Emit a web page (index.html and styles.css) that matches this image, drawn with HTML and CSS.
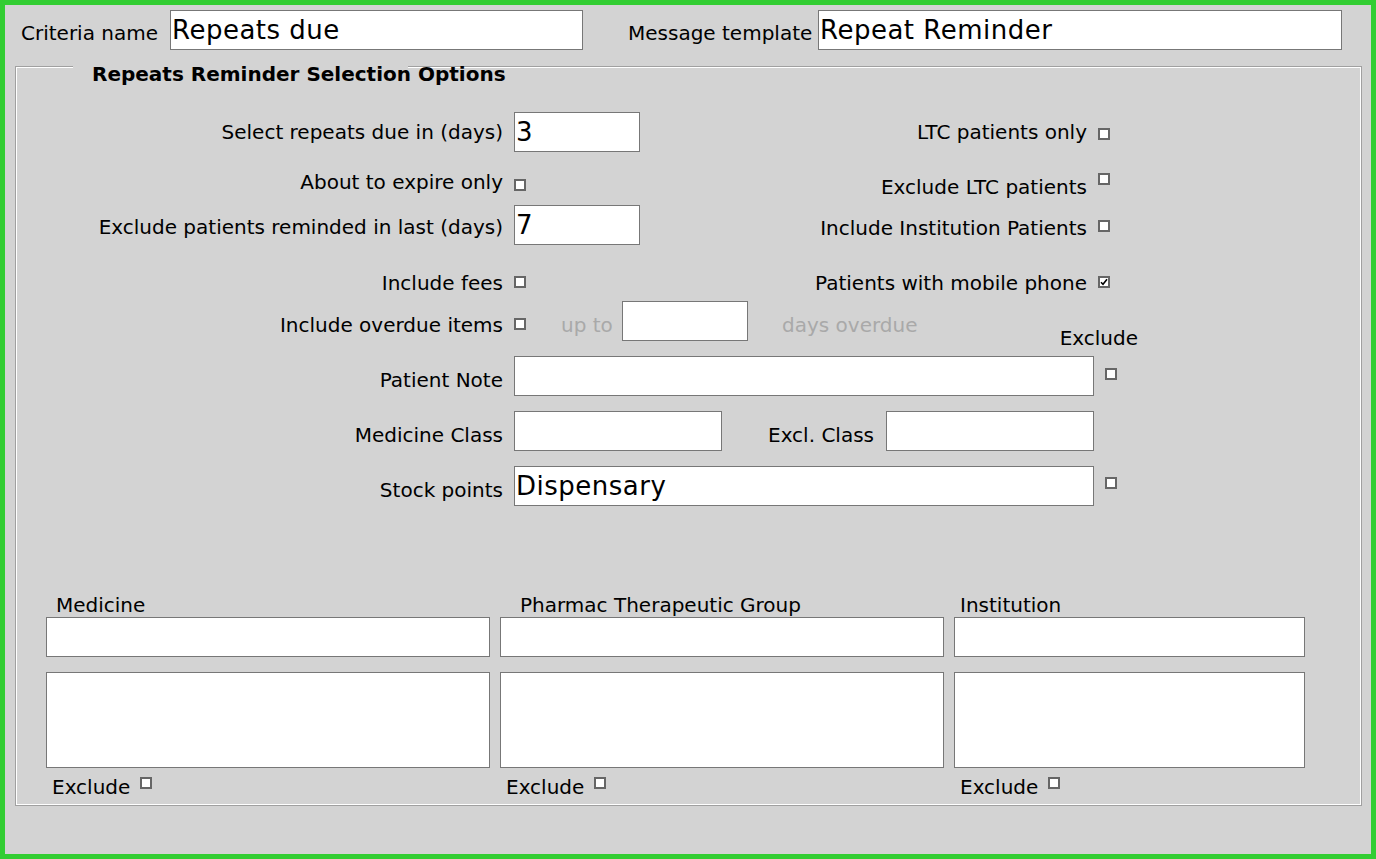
FILE: index.html
```html
<!DOCTYPE html>
<html lang="en">
<head>
  <meta charset="UTF-8" />
  <title>Repeats Reminder Criteria</title>
  <link rel="stylesheet" href="styles.css">
</head>
<body>
  <div class="frame">
    <div class="head">
      <label class="hl crit-l">Criteria name</label>
      <input class="tx crit" value="Repeats due">
      <label class="hl msg">Message template</label>
      <input class="tx tmpl" value="Repeat Reminder">
    </div>

    <fieldset class="opts">
      <legend>Repeats Reminder Selection Options</legend>

      <div class="opt r1">
        <label class="lbl">Select repeats due in (days)</label>
        <input class="tx num" value="3">
        <div class="side"><label>LTC patients only</label><input type="checkbox" class="cb"></div>
      </div>

      <div class="opt r2">
        <label class="lbl">About to expire only</label>
        <input type="checkbox" class="cb">
        <div class="side"><label>Exclude LTC patients</label><input type="checkbox" class="cb"></div>
      </div>

      <div class="opt r3">
        <label class="lbl">Exclude patients reminded in last (days)</label>
        <input class="tx num" value="7">
        <div class="side"><label>Include Institution Patients</label><input type="checkbox" class="cb"></div>
      </div>

      <div class="opt r4">
        <label class="lbl">Include fees</label>
        <input type="checkbox" class="cb">
        <div class="side"><label>Patients with mobile phone</label><input type="checkbox" class="cb" checked></div>
      </div>

      <div class="opt r5">
        <label class="lbl">Include overdue items</label>
        <input type="checkbox" class="cb">
        <span class="dim upto">up to</span>
        <input class="tx num">
        <span class="dim days">days overdue</span>
        <span class="exhead">Exclude</span>
      </div>

      <div class="opt r6">
        <label class="lbl">Patient Note</label>
        <input class="tx wide">
        <input type="checkbox" class="cb">
      </div>

      <div class="opt r7">
        <label class="lbl">Medicine Class</label>
        <input class="tx cls">
        <label class="excl">Excl. Class</label>
        <input class="tx cls">
      </div>

      <div class="opt r8">
        <label class="lbl">Stock points</label>
        <input class="tx wide" value="Dispensary">
        <input type="checkbox" class="cb">
      </div>

      <div class="lists">
        <div class="col med">
          <label class="cap">Medicine</label>
          <input class="tx pick">
          <textarea class="box"></textarea>
          <div class="ex"><span>Exclude</span><input type="checkbox" class="cb"></div>
        </div>
        <div class="col grp">
          <label class="cap">Pharmac Therapeutic Group</label>
          <input class="tx pick">
          <textarea class="box"></textarea>
          <div class="ex"><span>Exclude</span><input type="checkbox" class="cb"></div>
        </div>
        <div class="col inst">
          <label class="cap">Institution</label>
          <input class="tx pick">
          <textarea class="box"></textarea>
          <div class="ex"><span>Exclude</span><input type="checkbox" class="cb"></div>
        </div>
      </div>
    </fieldset>
  </div>
</body>
</html>
```

FILE: styles.css
```css
html, body {
  margin: 0; padding: 0;
  background: #d3d3d3;
  color: #000;
  font-family: "DejaVu Sans", Verdana, sans-serif;
  font-size: 20px;
  line-height: 24px;
}
* { box-sizing: border-box; }

.frame {
  width: 1376px;
  height: 859px;
  border: 5px solid #32cd32;
  background: #d3d3d3;
  padding: 5px 10px 0;
}

/* text boxes */
.tx {
  height: 40px;
  border: 1px solid #777;
  background: #fff;
  font-family: "DejaVu Sans", Tahoma, sans-serif;
  font-size: 26px;
  letter-spacing: 0.5px;
  padding: 0 1px;
  margin: 0;
  color: #000;
  flex-shrink: 0;
}
.num { width: 126px; }
.wide { width: 580px; }
.cls { width: 208px; }

.cb {
  appearance: none;
  -webkit-appearance: none;
  width: 12px; height: 12px;
  margin: 0;
  border: 2px solid #666;
  background: #fff;
  flex-shrink: 0;
}
.cb:checked {
  background: #fff url("data:image/svg+xml,%3Csvg xmlns='http://www.w3.org/2000/svg' viewBox='0 0 8 8'%3E%3Cpath d='M1 4.2l2 2 4-5' fill='none' stroke='%23000' stroke-width='1.6'/%3E%3C/svg%3E") center/8px 8px no-repeat;
}

/* header row */
.head {
  display: flex;
  align-items: flex-start;
  padding-left: 6px;
  height: 40px;
}
.hl { margin-top: 11px; white-space: nowrap; }
.crit-l { width: 149px; }
.crit { width: 413px; }
.msg { width: 190px; margin-left: 45px; }
.tmpl { width: 524px; }

/* options group */
.opts {
  width: 1347px;
  margin: -3px 0 0;
  padding: 0 0 6px;
  border: 1px solid #a0a0a0;
  box-shadow: inset 0 0 0 1px #fff;
  min-inline-size: 0;
}
.opts legend {
  width: 335px;
  margin-left: 57px;
  padding: 15px 0 0 19px;
  white-space: nowrap;
  font-weight: bold;
  background: #d3d3d3;
}

.opt {
  display: flex;
  align-items: flex-start;
  gap: 11px;
  width: 1094px;
  padding-left: 1px;
}
.lbl {
  width: 486px;
  text-align: right;
  flex-shrink: 0;
  margin-top: 12px;
  white-space: nowrap;
}
.side {
  margin-left: auto;
  display: flex;
  align-items: flex-start;
  gap: 11px;
  white-space: nowrap;
}

.r1 { margin-top: 26px; }
.r1 .lbl { margin-top: 8px; }
.r1 .side { margin-top: 8px; }
.r1 .side .cb { margin-top: 8px; }

.r2 { margin-top: 18px; }
.r2 .lbl { margin-top: 0; }
.r2 > .cb { margin-top: 9px; }
.r2 .side { margin-top: 5px; }
.r2 .side .cb { margin-top: -2px; }

.r3 { margin-top: 6px; }
.r3 .lbl { margin-top: 10px; }
.r3 .side { margin-top: 11px; }
.r3 .side .cb { margin-top: 4px; }

.r4 { margin-top: 26px; }
.r4 .lbl { margin-top: 0; }
.r4 .cb { margin-top: 5px; }

.r5 { margin-top: 6px; }
.r5 > .cb { margin-top: 17px; }
.dim { color: #a9a9a9; margin-top: 12px; white-space: nowrap; }
.upto { width: 50px; margin-left: 24px; }
.days { margin-left: 23px; }
.exhead {
  margin: 25px -28px -9px auto;
}

.r6, .r7, .r8 { margin-top: 15px; }
.r6 > .cb { margin-top: 12px; }
.r8 > .cb { margin-top: 11px; }
.excl { width: 107px; margin: 12px 0 0 35px; white-space: nowrap; }

/* pick lists */
.lists {
  display: flex;
  gap: 10px;
  margin-top: 87px;
  padding-left: 30px;
}
.col {
  display: flex;
  flex-direction: column;
  width: 444px;
}
.col.inst { width: 351px; }
.cap { padding-left: 6px; white-space: nowrap; }
.med .cap { padding-left: 10px; }
.grp .cap { padding-left: 20px; }
.pick { width: 100%; }
.box {
  width: 100%;
  height: 96px;
  margin: 15px 0 0;
  border: 1px solid #777;
  background: #fff;
  resize: none;
}
.ex {
  display: flex;
  align-items: flex-start;
  gap: 10px;
  margin-top: 7px;
  padding-left: 6px;
}
.ex .cb { margin-top: 2px; }
```
